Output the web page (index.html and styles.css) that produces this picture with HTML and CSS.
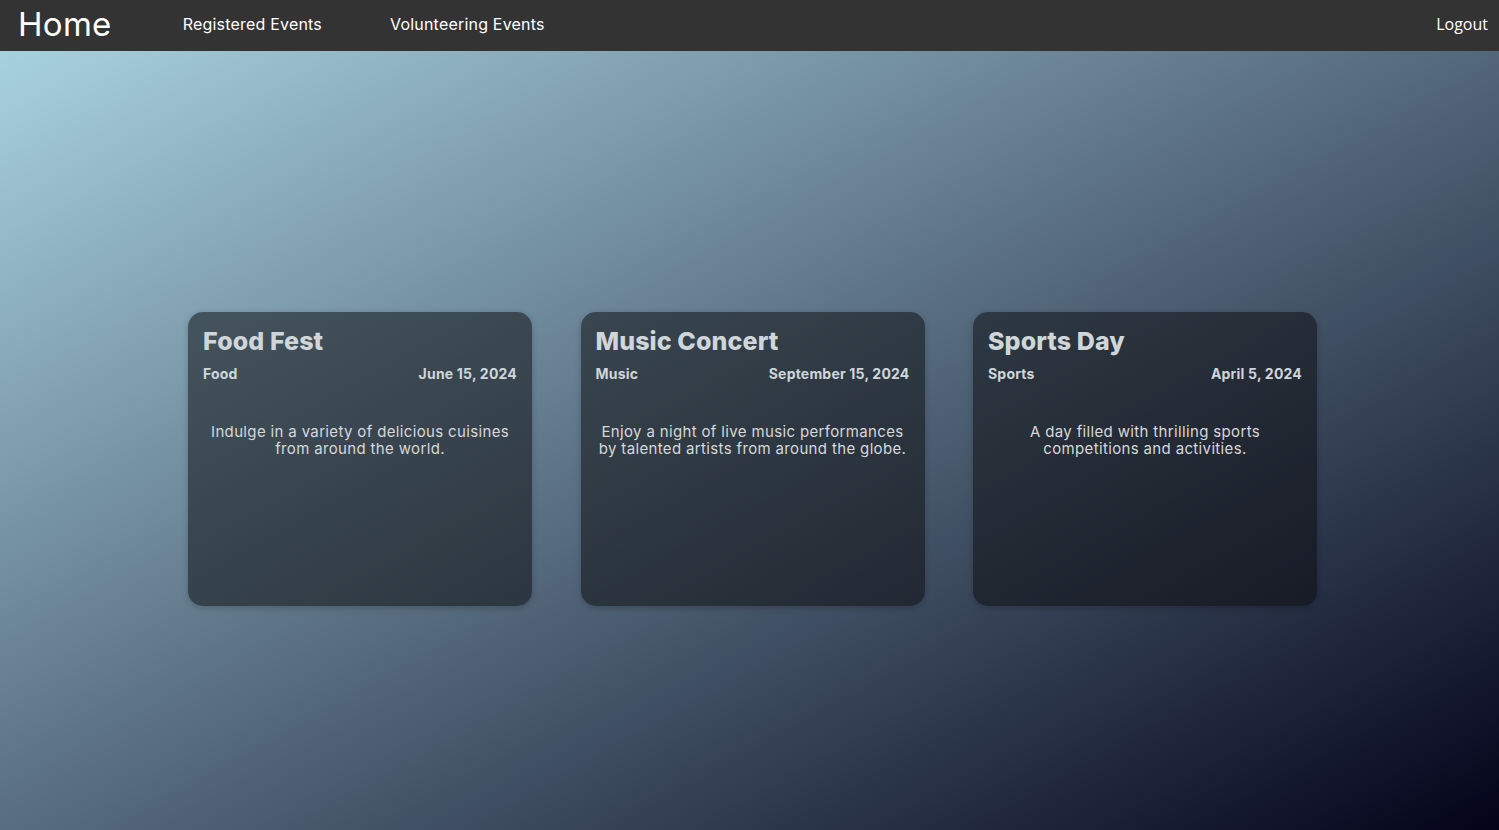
FILE: index.html
```html
<!DOCTYPE html>
<html lang="en">
<head>
<meta charset="utf-8">
<title>Home</title>
<link rel="stylesheet" href="styles.css">
</head>
<body>
<nav class="navbar">
  <a class="brand" href="#">Home</a>
  <a class="nav-link" href="#">Registered Events</a>
  <a class="nav-link" href="#">Volunteering Events</a>
  <a class="logout" href="#">Logout</a>
</nav>
<main class="events">
  <div class="card">
    <h3 class="card-title">Food Fest</h3>
    <div class="card-meta"><span>Food</span><span>June 15, 2024</span></div>
    <p class="card-desc">Indulge in a variety of delicious cuisines from around the world.</p>
  </div>
  <div class="card">
    <h3 class="card-title">Music Concert</h3>
    <div class="card-meta"><span>Music</span><span>September 15, 2024</span></div>
    <p class="card-desc">Enjoy a night of live music performances by talented artists from around the globe.</p>
  </div>
  <div class="card">
    <h3 class="card-title">Sports Day</h3>
    <div class="card-meta"><span>Sports</span><span>April 5, 2024</span></div>
    <p class="card-desc">A day filled with thrilling sports competitions and activities.</p>
  </div>
</main>
</body>
</html>
```
FILE: styles.css
```css
* { box-sizing: border-box; }
html, body { height: 100%; }
body {
  margin: 0;
  font-family: "Inter", "Open Sans", sans-serif;
  background: linear-gradient(to bottom right, #add8e6 0%, #03031a 100%);
  min-height: 830px;
  overflow: hidden;
}
.navbar {
  height: 51px;
  background: #333333;
  display: flex;
  align-items: center;
  padding: 0 11px 3px 18px;
}
.navbar a { color: #ffffff; text-decoration: none; }
.brand {
  font-size: 33px;
  font-weight: 400;
  letter-spacing: 0.3px;
  margin-right: 71px;
}
.nav-link {
  font-size: 16px;
  letter-spacing: 0.2px;
  margin-right: 68px;
}
.logout {
  margin-left: auto;
  font-family: "Open Sans", sans-serif;
  font-size: 16px;
}
.events {
  display: flex;
  justify-content: center;
  gap: 48.5px;
  padding-top: 261px;
  padding-left: 6px;
}
.card {
  width: 344px;
  height: 294px;
  border-radius: 15px;
  padding: 14px 15px;
  background: rgba(12, 12, 14, 0.52);
  box-shadow: 0 2px 6px rgba(0, 0, 0, 0.2);
  color: #cfd6da;
}
.card-title {
  margin: 0;
  font-size: 25px;
  font-weight: 800;
  line-height: 30px;
  letter-spacing: 0.1px;
}
.card-meta {
  display: flex;
  justify-content: space-between;
  margin-top: 9px;
  font-size: 14px;
  font-weight: 700;
  line-height: 18px;
  letter-spacing: 0.2px;
}
.card-desc {
  margin: 40px 0 0;
  text-align: center;
  font-size: 15px;
  line-height: 17px;
  letter-spacing: 0.35px;
  color: #d6d8da;
}
```
